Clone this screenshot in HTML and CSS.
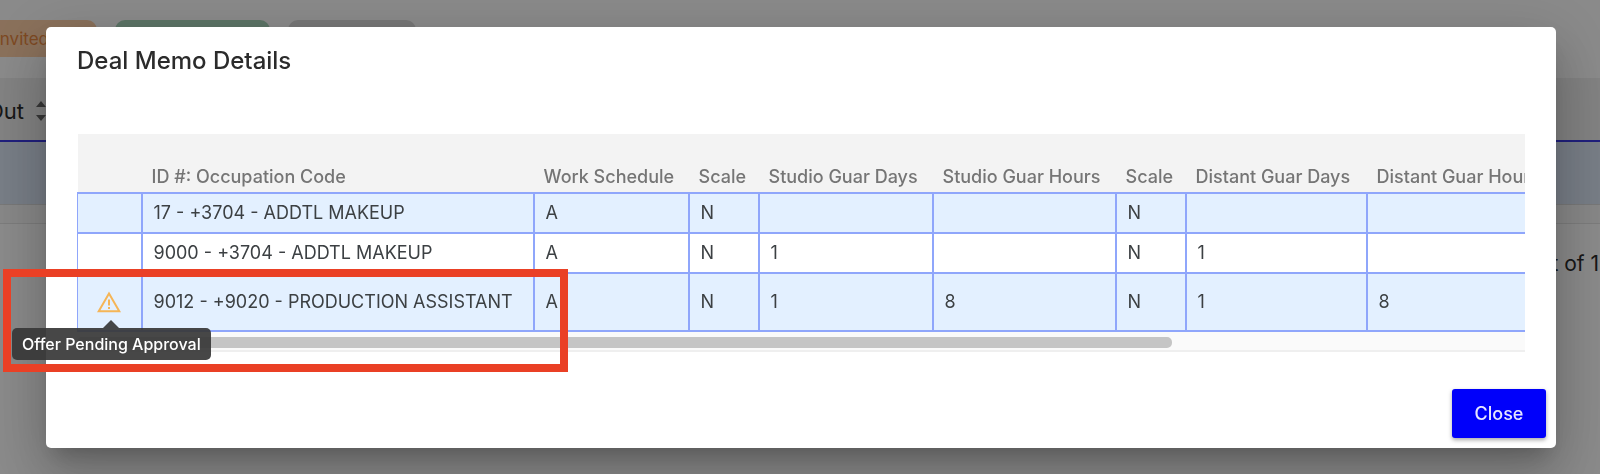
FILE: index.html
```html
<!DOCTYPE html>
<html lang="en">
<head>
    <meta charset="UTF-8">
    <meta name="viewport" content="width=device-width, initial-scale=1.0">
    <title>Deal Memo Details</title>
    <link rel="stylesheet" href="styles.css">
</head>
<body>
    <!-- Page behind the dialog -->
    <div class="page">
        <div class="chips">
            <span class="chip chip-invited">Invited</span>
            <span class="chip chip-green"></span>
            <span class="chip chip-grey"></span>
        </div>
        <div class="list-head">
            <span class="list-label">Out</span>
            <svg class="sort-icon" viewBox="0 0 12 20" aria-hidden="true">
                <path d="M6 0 L11 6 H1 Z M6 20 L11 14 H1 Z"/>
            </svg>
        </div>
        <div class="list-row"></div>
        <div class="list-scroll"></div>
        <div class="pager">1 out of 1</div>
    </div>

    <div class="overlay">
        <div class="dialog" role="dialog" aria-modal="true" aria-labelledby="dialogTitle">
            <h2 class="dialog-title" id="dialogTitle">Deal Memo Details</h2>

            <div class="table-wrap">
                <div class="table-scroll">
                    <table class="memo-table">
                        <colgroup>
                            <col class="col-icon">
                            <col class="col-code">
                            <col class="col-schedule">
                            <col class="col-scale">
                            <col class="col-studio-days">
                            <col class="col-studio-hours">
                            <col class="col-scale">
                            <col class="col-distant-days">
                            <col class="col-distant-hours">
                        </colgroup>
                        <thead>
                            <tr>
                                <th></th>
                                <th>ID #: Occupation Code</th>
                                <th>Work Schedule</th>
                                <th>Scale</th>
                                <th>Studio Guar Days</th>
                                <th>Studio Guar Hours</th>
                                <th>Scale</th>
                                <th>Distant Guar Days</th>
                                <th>Distant Guar Hours</th>
                            </tr>
                        </thead>
                        <tbody>
                            <tr>
                                <td></td>
                                <td>17 - +3704 - ADDTL MAKEUP</td>
                                <td>A</td>
                                <td>N</td>
                                <td></td>
                                <td></td>
                                <td>N</td>
                                <td></td>
                                <td></td>
                            </tr>
                            <tr>
                                <td></td>
                                <td>9000 - +3704 - ADDTL MAKEUP</td>
                                <td>A</td>
                                <td>N</td>
                                <td>1</td>
                                <td></td>
                                <td>N</td>
                                <td>1</td>
                                <td></td>
                            </tr>
                            <tr class="pending">
                                <td class="icon-cell">
                                    <svg class="warn-icon" viewBox="0 0 24 22" role="img" aria-label="Warning">
                                        <path d="M12 2.5 L22.3 20.2 H1.7 Z" fill="none" stroke="#f5b557" stroke-width="2"/>
                                        <path d="M12 8.5 V14.5 M12 16 V18" fill="none" stroke="#f5b557" stroke-width="2"/>
                                    </svg>
                                </td>
                                <td>9012 - +9020 - PRODUCTION ASSISTANT</td>
                                <td>A</td>
                                <td>N</td>
                                <td>1</td>
                                <td>8</td>
                                <td>N</td>
                                <td>1</td>
                                <td>8</td>
                            </tr>
                        </tbody>
                    </table>
                </div>
                <div class="scrollbar"><div class="scroll-thumb"></div></div>
            </div>

            <div class="dialog-actions">
                <button type="button" class="close-btn">Close</button>
            </div>
        </div>

        <div class="tooltip" role="tooltip">Offer Pending Approval</div>
        <div class="highlight"></div>
    </div>
</body>
</html>
```
FILE: styles.css
```css
* {
    box-sizing: border-box;
}

body {
    font-family: 'Inter', 'Liberation Sans', sans-serif;
    color: #2b2b2b;
    margin: 0;
    min-height: 100vh;
    overflow: hidden;
}

.page {
    padding-top: 20px;
    overflow: hidden;
}

.chips {
    display: flex;
    gap: 18px;
}

.chip {
    height: 37px;
    border-radius: 10px;
}

.chip-invited {
    display: flex;
    justify-content: flex-end;
    align-items: center;
    width: 97px;
    padding-right: 48px;
    border-radius: 0 10px 10px 0;
    background: #ffd0a8;
    color: #e8873f;
    font-size: 17px;
}

.chip-green {
    width: 155px;
    background: #aad6bc;
}

.chip-grey {
    width: 128px;
    background: #dcdcdc;
}

.list-head {
    display: flex;
    justify-content: flex-end;
    align-items: center;
    gap: 11px;
    height: 64px;
    margin-top: 21px;
    padding-top: 4px;
    padding-right: calc(100% - 47px);
    background: #f0f0f0;
    border-bottom: 2px solid #3a3ae6;
}

.list-label {
    font-size: 22px;
}

.sort-icon {
    flex: none;
    width: 12px;
    height: 20px;
    fill: #666;
}

.list-row {
    height: 63px;
    background: #dde8f8;
    border-bottom: 1px solid #ddd;
}

.list-scroll {
    height: 19px;
    background: #fafafa;
    border-bottom: 1px solid #e5e5e5;
}

.pager {
    padding: 28px 1px 0 0;
    font-size: 21px;
    line-height: 24px;
    text-align: right;
}

.overlay {
    position: fixed;
    inset: 0;
    padding: 27px 44px 0 46px;
    background: rgba(0, 0, 0, 0.46);
}

.dialog {
    background: white;
    border-radius: 5px;
    box-shadow: 0 14px 20px -9px rgba(0, 0, 0, 0.2),
                0 32px 50px 4px rgba(0, 0, 0, 0.14),
                0 12px 60px 10px rgba(0, 0, 0, 0.12);
}

.dialog-title {
    margin: 0;
    padding: 18px 31px 57px;
    font-size: 24px;
    font-weight: 500;
    line-height: 32px;
}

.table-wrap {
    margin: 0 31px;
}

.table-scroll {
    overflow: hidden;
}

.memo-table {
    width: 1914px;
    table-layout: fixed;
    border-collapse: collapse;
    font-size: 18px;
    line-height: 22px;
}

.col-icon {
    width: 64px;
}

.col-code {
    width: 392px;
}

.col-schedule {
    width: 155px;
}

.col-scale {
    width: 70px;
}

.col-studio-days {
    width: 174px;
}

.col-studio-hours {
    width: 183px;
}

.col-distant-days {
    width: 181px;
}

.memo-table th {
    height: 59px;
    padding: 0 10px 4px;
    background: #f3f3f3;
    color: #757575;
    font-weight: 500;
    text-align: left;
    vertical-align: bottom;
    white-space: nowrap;
}

.memo-table td {
    height: 40px;
    padding: 0 11px;
    border: 2px solid #8fa6fb;
    color: #3c4043;
    white-space: nowrap;
}

.memo-table td:first-child {
    border-left-width: 1px;
    border-right-width: 1px;
}

.memo-table tbody tr:nth-child(odd) td {
    background: #e3f0ff;
}

.memo-table .pending td {
    height: 58px;
}

.memo-table .icon-cell {
    padding: 0;
    text-align: center;
}

.warn-icon {
    display: block;
    width: 24px;
    height: 22px;
    margin: 0 auto;
}

.scrollbar {
    height: 20px;
    padding-top: 5px;
    background: #fafafa;
    border-bottom: 2px solid #efefef;
}

.scroll-thumb {
    width: 75.6%;
    height: 11px;
    background: #c5c5c5;
    border-radius: 5px;
}

.dialog-actions {
    display: flex;
    justify-content: flex-end;
    padding: 37px 10px 10px;
}

.close-btn {
    width: 94px;
    height: 49px;
    border: none;
    border-radius: 3px;
    background: #0000fa;
    box-shadow: 0 2px 4px rgba(0, 0, 0, 0.35);
    color: #e6e6ff;
    font-family: inherit;
    font-size: 18px;
    font-weight: 500;
    cursor: pointer;
}

.tooltip {
    position: absolute;
    top: 328px;
    left: 12px;
    padding: 0 10px;
    border-radius: 5px;
    background: rgba(55, 55, 55, 0.92);
    color: white;
    font-size: 16px;
    font-weight: 500;
    line-height: 32px;
}

.tooltip::before {
    content: "";
    position: absolute;
    bottom: 100%;
    left: 50%;
    margin-left: -8px;
    border: 8px solid transparent;
    border-top: none;
    border-bottom-color: rgba(55, 55, 55, 0.92);
}

/* Frame that marks the pending row */
.highlight {
    position: absolute;
    top: 269px;
    left: 3px;
    width: 565px;
    height: 103px;
    border: 8px solid #ea4025;
}
```
